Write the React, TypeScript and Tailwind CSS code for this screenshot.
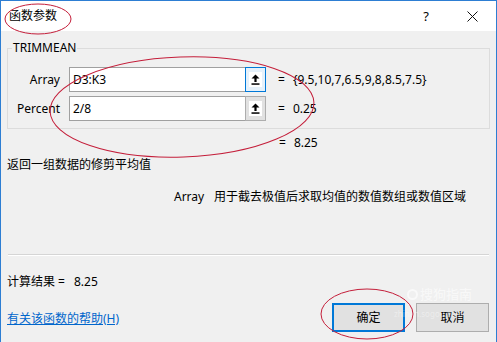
import React from "react";

const FONT = '"Segoe UI", "Noto Sans", "Noto Sans CJK SC", sans-serif';

function RefButton({ active }: { active: boolean }) {
  return (
    <div
      className={
        "w-[21px] h-[25px] flex items-center justify-center border " +
        (active ? "border-[#0078d7] bg-[#e5f1fb]" : "border-[#adadad] bg-[#e1e1e1]")
      }
    >
      <div className="w-[13px] h-[15px] bg-white flex items-center justify-center">
        <svg width="9" height="11" viewBox="0 0 9 11">
          <path d="M4.5 0.5 L8.5 4.5 L5.6 4.5 L5.6 8 L3.4 8 L3.4 4.5 L0.5 4.5 Z" fill="#000" />
          <rect x="0.5" y="9.3" width="8" height="1.5" fill="#000" />
        </svg>
      </div>
    </div>
  );
}

function ArgRow({
  label,
  value,
  result,
  active,
}: {
  label: string;
  value: string;
  result: string;
  active: boolean;
}) {
  return (
    <div className="flex items-center h-[25px]">
      <div className="w-[52px] text-right text-[12px] leading-[16px] text-[#000]">{label}</div>
      <div className="ml-[9px] flex">
        <div className="w-[176px] h-[25px] bg-white border border-[#a0a0a0] border-r-0 flex items-center pl-[3px] text-[12px] leading-[16px]">
          {value}
        </div>
        <RefButton active={active} />
      </div>
      <div className="ml-[12px] text-[12px] leading-[16px]">=</div>
      <div className="ml-[8px] text-[12px] leading-[16px]">{result}</div>
    </div>
  );
}

export default function App() {
  return (
    <div
      className="relative w-[497px] h-[342px] overflow-hidden border-x border-t border-[#2d7ed3] flex flex-col text-[#000]"
      style={{ fontFamily: FONT }}
    >
      {/* Title bar */}
      <div className="h-[30px] bg-white flex items-center shrink-0">
        <div className="ml-[8px] text-[12px] leading-[16px]">函数参数</div>
        <div className="ml-auto text-[13px] leading-[16px] mr-[38px]">?</div>
        <svg width="11" height="11" viewBox="0 0 11 11" className="mr-[18px]">
          <path d="M0.5 0.5 L10.5 10.5 M10.5 0.5 L0.5 10.5" stroke="#111" strokeWidth="1" />
        </svg>
      </div>

      {/* Body */}
      <div className="flex-1 bg-[#f0f0f0] pl-[6px] pr-[6px] flex flex-col">
        {/* Group box */}
        <div className="relative mt-[17px] h-[81px] border border-[#dcdcdc] pt-[18px] flex flex-col gap-[4px]">
          <div className="absolute left-[4px] top-[-9px] px-[1px] bg-[#f0f0f0] text-[12px] leading-[16px]">
            TRIMMEAN
          </div>
          <ArgRow label="Array" value="D3:K3" result="{9.5,10,7,6.5,9,8,8.5,7.5}" active />
          <ArgRow label="Percent" value="2/8" result="0.25" active={false} />
        </div>

        <div className="mt-[6px] flex text-[12px] leading-[16px]">
          <div className="ml-[272px]">=</div>
          <div className="ml-[8px]">8.25</div>
        </div>

        <div className="mt-[6px] text-[12px] leading-[16px]">返回一组数据的修剪平均值</div>

        <div className="mt-[16px] pl-[167px] flex text-[12px] leading-[16px]">
          <div className="w-[40px]">Array</div>
          <div>用于截去极值后求取均值的数值数组或数值区域</div>
        </div>

        <div className="mt-[49px] mx-[1px] h-[2px] border-t border-[#d5d5d5] border-b border-b-white" />

        <div className="mt-[18px] text-[12px] leading-[16px] flex">
          <span>计算结果 =</span>
          <span className="ml-[9px]">8.25</span>
        </div>

        <div className="mt-[13px] flex items-center">
          <a className="text-[12px] leading-[16px] text-[#0066cc] underline mt-[2px]">有关该函数的帮助(H)</a>
          <div className="ml-auto mr-[1px] flex gap-[11px]">
            <div className="w-[73px] h-[29px] border-2 border-[#0078d7] bg-[#e1e1e1] flex items-center justify-center text-[12px] leading-[16px]">
              确定
            </div>
            <div className="w-[73px] h-[29px] border border-[#adadad] bg-[#e1e1e1] flex items-center justify-center text-[12px] leading-[16px]">
              取消
            </div>
          </div>
        </div>
      </div>

      {/* watermark */}
      <div className="absolute left-[406px] top-[286px] flex items-center gap-[2px] pointer-events-none text-white/60">
        <div className="w-[11px] h-[11px] rounded-full border-2 border-white/60" />
        <div className="text-[13px] leading-[14px]">搜狗指南</div>
      </div>
      <div className="absolute left-[393px] top-[308px] text-[8px] leading-[9px] text-white/40 pointer-events-none">
        zhinan.sogou.com
      </div>

      {/* Red annotation ellipses */}
      <svg
        className="absolute left-0 top-0 pointer-events-none"
        width="497"
        height="342"
        viewBox="0 0 497 342"
      >
        <ellipse cx="37" cy="18" rx="33" ry="15" fill="none" stroke="#c41e3a" strokeWidth="1" />
        <ellipse
          cx="181"
          cy="106"
          rx="132"
          ry="50"
          fill="none"
          stroke="#c41e3a"
          strokeWidth="1"
          transform="rotate(-2 181 106)"
        />
        <ellipse cx="366" cy="313" rx="46" ry="25" fill="none" stroke="#c41e3a" strokeWidth="1" />
      </svg>
    </div>
  );
}
